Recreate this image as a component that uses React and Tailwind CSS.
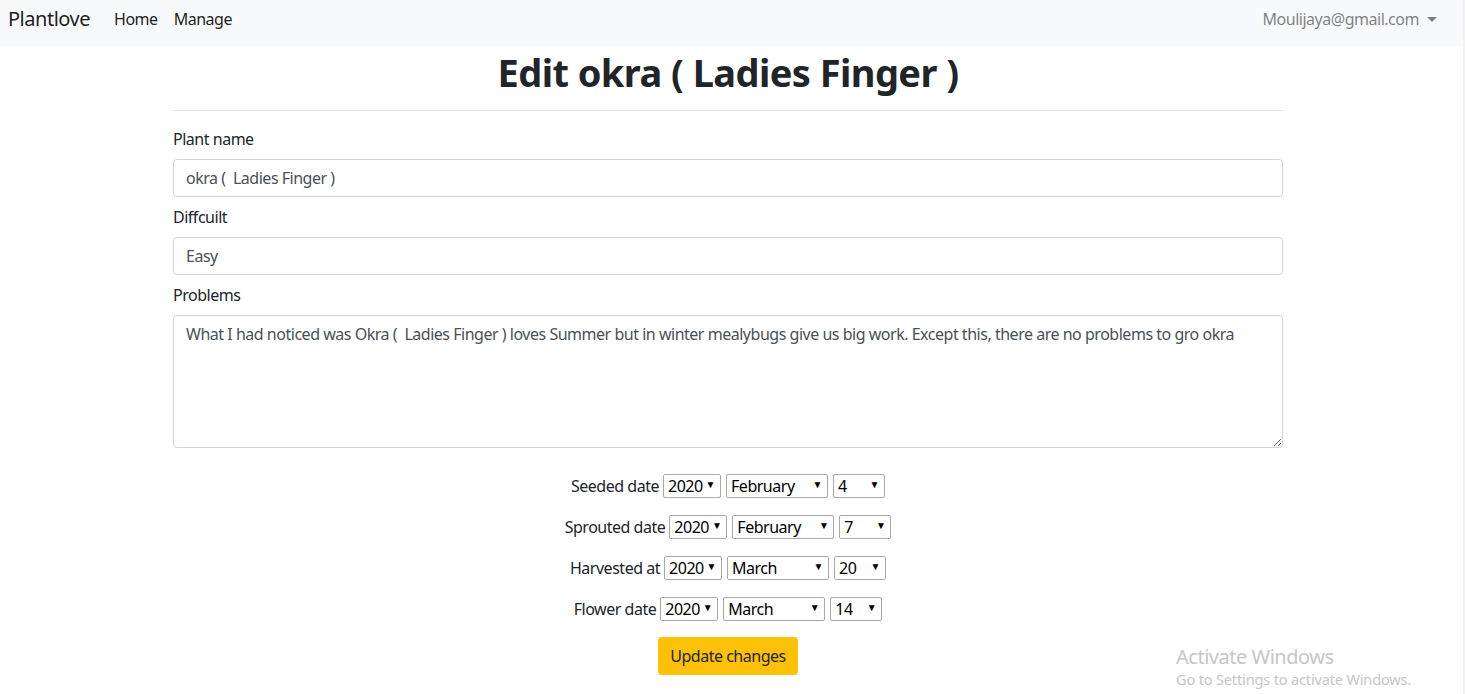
import { useState } from "react";

const years = ["2018", "2019", "2020", "2021"];
const months = [
  "January", "February", "March", "April", "May", "June",
  "July", "August", "September", "October", "November", "December",
];
const days = Array.from({ length: 31 }, (_, i) => String(i + 1));

function Picker({ value, options, width, onChange }) {
  return (
    <div className={`relative inline-block h-[24px] ${width}`}>
      <select
        value={value}
        onChange={(e) => onChange(e.target.value)}
        className="appearance-none w-full h-full border border-[#a9a9a9] rounded-[2px] bg-white pl-[4px] pr-[16px] text-[16px] leading-[22px] text-black outline-none"
      >
        {options.map((o) => (
          <option key={o} value={o}>
            {o}
          </option>
        ))}
      </select>
      <span className="pointer-events-none absolute right-[6px] top-[3px] text-[10px] leading-[14px] text-black">
        ▼
      </span>
    </div>
  );
}

function DateRow({ label, date, setDate }) {
  return (
    <div className="flex items-center justify-center gap-[5px] h-[24px]">
      <span className="mr-[-1px]">{label}</span>
      <Picker
        value={date.year}
        options={years}
        width="w-[58px]"
        onChange={(v) => setDate({ ...date, year: v })}
      />
      <Picker
        value={date.month}
        options={months}
        width="w-[102px]"
        onChange={(v) => setDate({ ...date, month: v })}
      />
      <Picker
        value={date.day}
        options={days}
        width="w-[52px]"
        onChange={(v) => setDate({ ...date, day: v })}
      />
    </div>
  );
}

export default function App() {
  const [name, setName] = useState("okra (  Ladies Finger )");
  const [difficulty, setDifficulty] = useState("Easy");
  const [problems, setProblems] = useState(
    "What I had noticed was Okra (  Ladies Finger ) loves Summer but in winter mealybugs give us big work. Except this, there are no problems to gro okra"
  );
  const [seeded, setSeeded] = useState({ year: "2020", month: "February", day: "4" });
  const [sprouted, setSprouted] = useState({ year: "2020", month: "February", day: "7" });
  const [harvested, setHarvested] = useState({ year: "2020", month: "March", day: "20" });
  const [flower, setFlower] = useState({ year: "2020", month: "March", day: "14" });

  const inputCls =
    "w-full h-[38px] border border-[#ced4da] rounded-[4px] px-[12px] text-[16px] text-[#495057] bg-white outline-none tracking-[-0.03em]";

  return (
    <div className="relative min-h-[694px] w-full bg-white text-[#212529] text-[16px] tracking-[-0.03em] font-['Noto_Sans',sans-serif] border-r-[2px] border-[#f0f0f0]">
      {/* Navbar */}
      <nav className="flex items-start h-[46px] bg-[#f8f9fa] pl-[8px] pt-[7px] leading-[24px]">
        <a className="text-[20px] text-black/90 mr-[24px]">Plantlove</a>
        <a className="text-black/90 mr-[16px]">Home</a>
        <a className="text-black/90">Manage</a>
        <div className="ml-auto flex items-center gap-[8px] mr-[26px] text-black/50">
          <span>Moulijaya@gmail.com</span>
          <span className="w-0 h-0 border-l-[5px] border-r-[5px] border-t-[5px] border-l-transparent border-r-transparent border-t-black/50" />
        </div>
      </nav>

      <div className="ml-[173px] w-[1110px]">
        <h1 className="h-[54px] pt-[2px] text-center text-[38px] leading-[48px] font-bold tracking-[-0.015em]">
          Edit okra ( Ladies Finger )
        </h1>
        <hr className="mt-[10px] border-t border-black/10" />

        <form className="mt-[16px]" onSubmit={(e) => e.preventDefault()}>
          <label className="block leading-[24px] mb-[8px]">Plant name</label>
          <input value={name} onChange={(e) => setName(e.target.value)} className={inputCls} />

          <label className="block leading-[24px] mt-[8px] mb-[8px]">Diffcuilt</label>
          <input
            value={difficulty}
            onChange={(e) => setDifficulty(e.target.value)}
            className={inputCls}
          />

          <label className="block leading-[24px] mt-[8px] mb-[8px]">Problems</label>
          <textarea
            value={problems}
            onChange={(e) => setProblems(e.target.value)}
            className="block w-full h-[133px] border border-[#ced4da] rounded-[4px] px-[12px] py-[6px] text-[16px] leading-[24px] text-[#495057] bg-white outline-none tracking-[-0.03em]"
          />

          <div className="mt-[26px] flex flex-col gap-[17px]">
            <DateRow label="Seeded date" date={seeded} setDate={setSeeded} />
            <DateRow label="Sprouted date" date={sprouted} setDate={setSprouted} />
            <DateRow label="Harvested at" date={harvested} setDate={setHarvested} />
            <DateRow label="Flower date" date={flower} setDate={setFlower} />
          </div>

          <div className="flex justify-center mt-[16px]">
            <button
              type="submit"
              className="h-[38px] px-[12px] rounded-[4px] bg-[#ffc107] text-[#212529] text-[16px] tracking-[-0.03em]"
            >
              Update changes
            </button>
          </div>
        </form>
      </div>

      {/* Windows activation watermark */}
      <div className="absolute left-[1176px] top-[645px] text-[#c6c6c6] pointer-events-none">
        <div className="text-[20px] leading-[24px]">Activate Windows</div>
        <div className="text-[14.5px] leading-[20px] tracking-[-0.01em]">Go to Settings to activate Windows.</div>
      </div>
    </div>
  );
}
